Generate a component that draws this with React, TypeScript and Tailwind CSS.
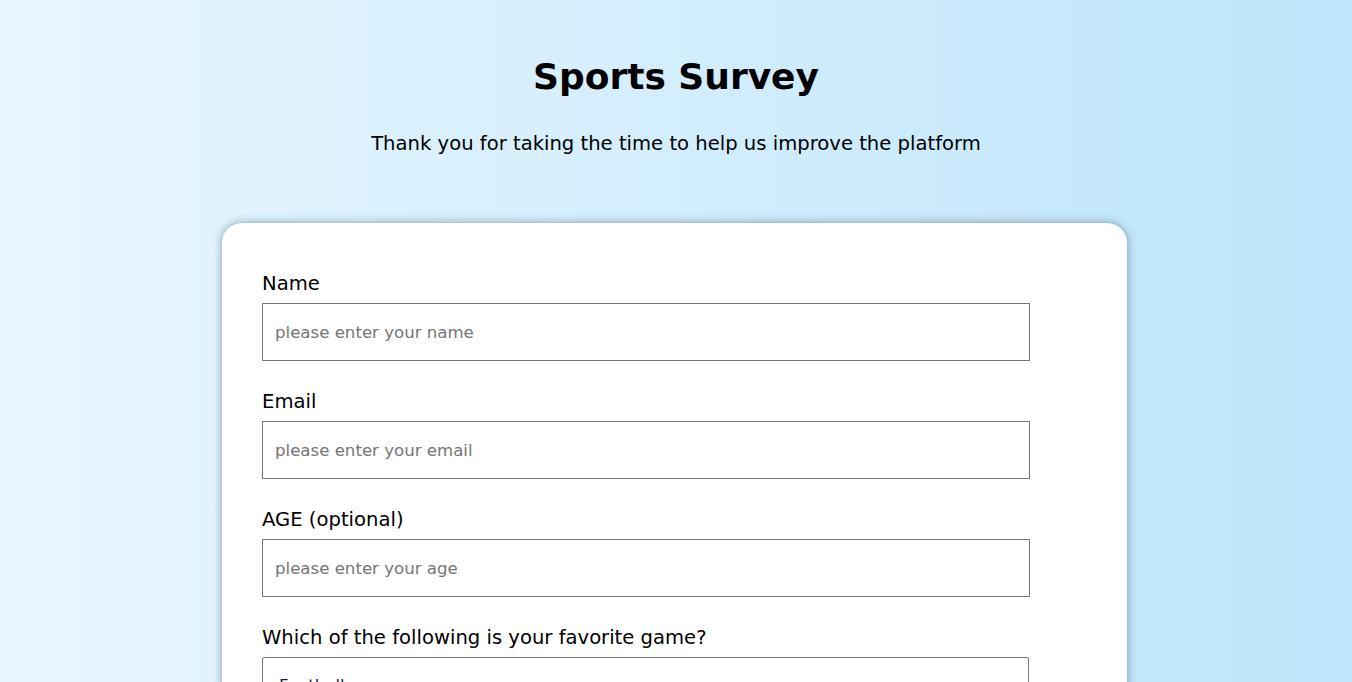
import { ChevronDown } from "lucide-react";

const FIELDS = [
  { id: "name", label: "Name", placeholder: "please enter your name", type: "text" },
  { id: "email", label: "Email", placeholder: "please enter your email", type: "email" },
  { id: "age", label: "AGE (optional)", placeholder: "please enter your age", type: "number" },
];

export default function App() {
  return (
    <main className="min-h-screen bg-gradient-to-r from-[#e8f6ff] to-[#bde5fb] font-['DejaVu_Sans',sans-serif] text-black pb-16">
      <header className="text-center pt-[52px]">
        <h1 className="text-[36px] leading-[50px] font-bold">Sports Survey</h1>
        <p className="mt-[28px] text-[19.6px] leading-[28px]">
          Thank you for taking the time to help us improve the platform
        </p>
      </header>

      <form className="ml-[calc(50%-454px)] mt-[65px] w-[905px] bg-white rounded-[20px] shadow-[0_0_10px_rgba(40,70,90,0.5)] px-10 pt-[47px] pb-10">
        {FIELDS.map((f) => (
          <div key={f.id} className="mb-[27px]">
            <label htmlFor={f.id} className="block text-[19.6px] leading-[27px] mb-[6px]">
              {f.label}
            </label>
            <input
              id={f.id}
              type={f.type}
              placeholder={f.placeholder}
              className="w-[768px] h-[58px] border border-[#767676] px-3 text-[16.6px] placeholder:text-[#757575] outline-none"
            />
          </div>
        ))}

        <div className="mb-[27px]">
          <label htmlFor="game" className="block text-[19.6px] leading-[27px] mb-[6px]">
            Which of the following is your favorite game?
          </label>
          <div className="relative w-[767px]">
            <select
              id="game"
              className="appearance-none w-full h-[58px] border border-[#767676] rounded-[2px] pl-4 pr-10 text-[16.6px] text-[#1a1a40] bg-white outline-none"
            >
              <option>Football</option>
              <option>Basketball</option>
              <option>Tennis</option>
              <option>Cricket</option>
            </select>
            <ChevronDown className="absolute right-2 top-1/2 -translate-y-1/2 w-4 h-4 text-[#555] pointer-events-none" />
          </div>
        </div>
      </form>
    </main>
  );
}
